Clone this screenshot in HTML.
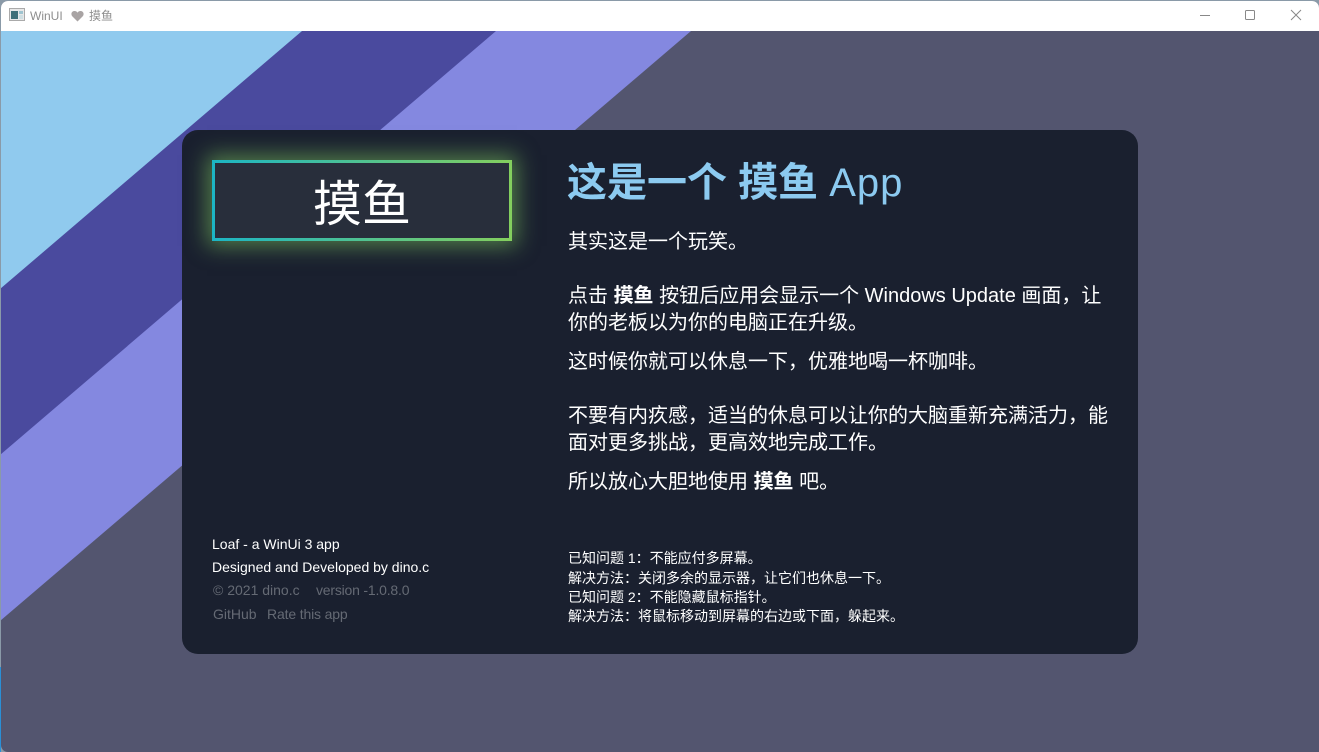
<!DOCTYPE html>
<html lang="zh">
<head>
<meta charset="utf-8">
<style>
html,body{margin:0;padding:0;width:1319px;height:752px;overflow:hidden;background:#8a9aa8;}
*{box-sizing:border-box;}
body{position:relative;font-family:"Liberation Sans","Noto Sans CJK SC",sans-serif;}
.t{position:absolute;white-space:nowrap;}
#win{position:absolute;left:1px;top:1px;width:1318px;height:751px;background:#53556f;border-radius:7px 7px 0 7px;overflow:hidden;}
#leftedge{position:absolute;left:0;top:667px;width:1px;height:85px;background:#2a8fd6;}
#title{position:absolute;left:0;top:0;width:1318px;height:30px;background:#fff;}
#card{position:absolute;left:182px;top:130px;width:956px;height:524px;background:#1a202f;border-radius:16px;}
#btn{position:absolute;left:212px;top:160px;width:300px;height:81px;padding:3px;background:linear-gradient(90deg,#1cb5c4,#84cf5e);box-shadow:0 0 20px 5px rgba(125,200,95,.55);}
#btn div{width:100%;height:100%;background:#282e3b;}
.p{color:#fff;font-size:20px;line-height:27px;}
.s{color:#fff;font-size:14px;line-height:19.5px;}
.g{color:#656a74;font-size:14px;line-height:20px;}
.w{color:#fff;font-size:14px;line-height:20px;}
</style>
</head>
<body>
<div id="win">
<svg width="1318" height="751" style="position:absolute;left:0;top:0">
<polygon points="-1,30 690,30 -1,620" fill="#8488e0"/>
<polygon points="-1,30 495,30 -1,454" fill="#4a4a9e"/>
<polygon points="-1,30 301,30 -1,288" fill="#90caee"/>
</svg>
<div id="title"></div>
</div>
<div id="leftedge"></div>

<svg width="18" height="14" style="position:absolute;left:9px;top:8px">
<rect x=".5" y=".5" width="15" height="12" fill="#e8e8e8" stroke="#aaa"/>
<rect x="2" y="3" width="7" height="8" fill="#3f6f78"/>
<rect x="10" y="3" width="4" height="3" fill="#9fc4d0"/>
<rect x="10" y="7" width="4" height="4" fill="#cfdfe3"/>
</svg>
<div class="t" style="left:30px;top:8px;font-size:12px;line-height:16px;color:#8d8d8d;">WinUI</div>
<svg width="14" height="12" style="position:absolute;left:71px;top:10px"><path d="M6.500 11.500 1 6C-.5 3.500 1 1 3.500 1 5 1 6 1.700 6.500 2.700 7 1.700 8 1 9.500 1 12 1 13.500 3.500 12 6Z" fill="#a9a4a4"/></svg>
<div class="t" style="left:89px;top:8px;font-size:12px;line-height:16px;color:#8d8d8d;">摸鱼</div>

<svg width="125" height="30" style="position:absolute;left:1190px;top:0" fill="none" stroke="#888" stroke-width="1">
<path d="M10 15.500H20"/>
<rect x="55.500" y="10.500" width="9" height="9" rx="1"/>
<path d="M101 10 111 20M111 10 101 20"/>
</svg>

<div id="card"></div>
<div id="btn"><div></div></div>
<div class="t" style="left:212px;top:174px;width:300px;text-align:center;color:#fff;font-size:49px;line-height:62px;">摸鱼</div>

<div class="t" style="left:567px;top:157px;font-size:40px;line-height:52px;color:#8ccaf0;"><b>这是一个 摸鱼</b> <span style="letter-spacing:1px">App</span></div>
<div class="t p" style="left:568px;top:229px;">其实这是一个玩笑。</div>
<div class="t p" style="left:568px;top:283px;">点击 <b>摸鱼</b> 按钮后应用会显示一个 Windows Update 画面，让</div>
<div class="t p" style="left:568px;top:310px;">你的老板以为你的电脑正在升级。</div>
<div class="t p" style="left:568px;top:349px;">这时候你就可以休息一下，优雅地喝一杯咖啡。</div>
<div class="t p" style="left:568px;top:403px;">不要有内疚感，适当的休息可以让你的大脑重新充满活力，能</div>
<div class="t p" style="left:568px;top:430px;">面对更多挑战，更高效地完成工作。</div>
<div class="t p" style="left:568px;top:469px;">所以放心大胆地使用 <b>摸鱼</b> 吧。</div>

<div class="t s" style="left:568px;top:549px;">已知问题 1：不能应付多屏幕。</div>
<div class="t s" style="left:568px;top:568.500px;">解决方法：关闭多余的显示器，让它们也休息一下。</div>
<div class="t s" style="left:568px;top:588px;">已知问题 2：不能隐藏鼠标指针。</div>
<div class="t s" style="left:568px;top:607px;">解决方法：将鼠标移动到屏幕的右边或下面，躲起来。</div>

<div class="t w" style="left:212px;top:534px;">Loaf - a WinUi 3 app</div>
<div class="t w" style="left:212px;top:557px;">Designed and Developed by dino.c</div>
<div class="t g" style="left:213px;top:580px;">© 2021 dino.c</div>
<div class="t g" style="left:316px;top:580px;letter-spacing:-.2px;">version -1.0.8.0</div>
<div class="t g" style="left:213px;top:604px;">GitHub</div>
<div class="t g" style="left:267px;top:604px;letter-spacing:-.15px;">Rate this app</div>
</body>
</html>
